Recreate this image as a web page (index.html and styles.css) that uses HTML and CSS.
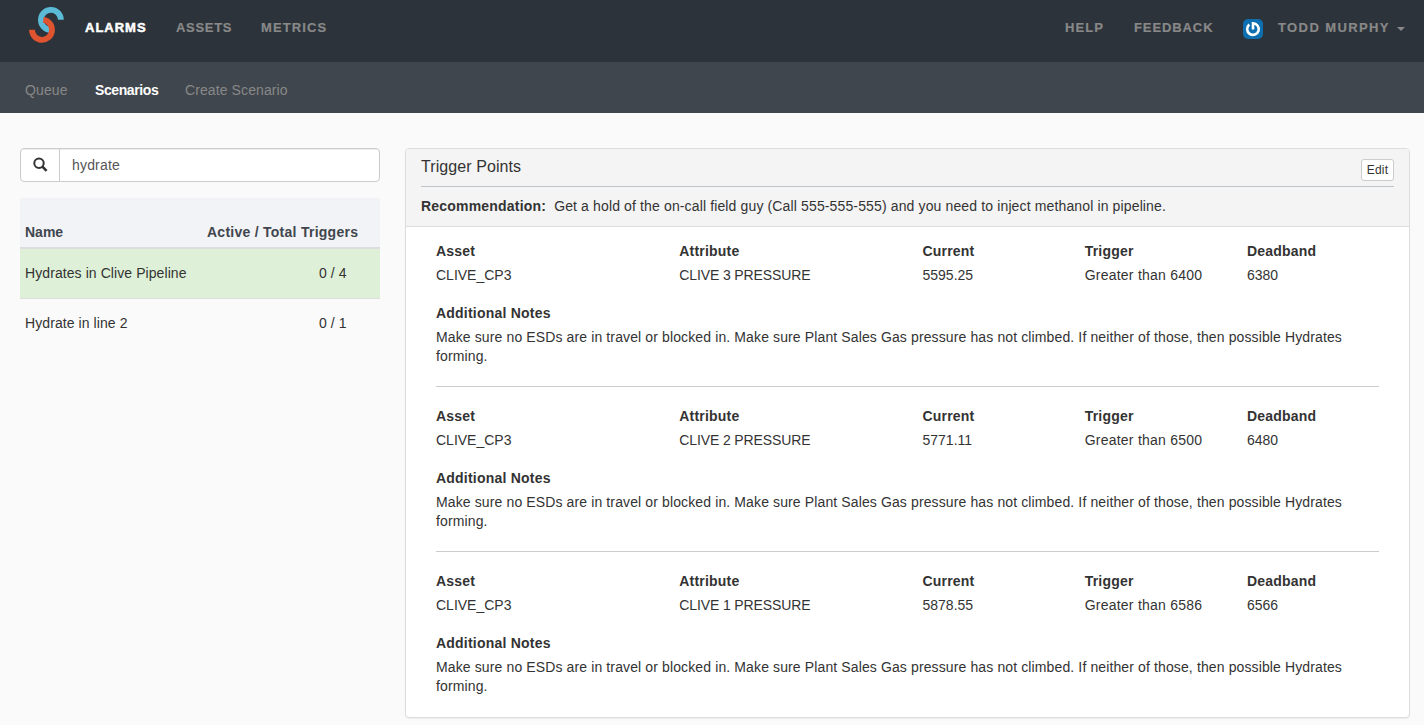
FILE: index.html
```html
<!DOCTYPE html>
<html lang="en">
<head>
<meta charset="utf-8">
<title>Scenarios</title>
<link rel="stylesheet" href="styles.css">
</head>
<body>
<header class="topbar">
  <svg class="logo" width="38" height="38" viewBox="0 0 38 38" fill="none" stroke-width="5.8">
    <path class="logo-blue" d="M33.9 13.7A10 10 0 1 0 22.5 23.8"/>
    <path class="logo-red" d="M5 23.8A10 10 0 1 0 16.4 13.9"/>
  </svg>
  <nav class="main-nav">
    <a class="nav-item active w-alarms">ALARMS</a>
    <a class="nav-item w-assets">ASSETS</a>
    <a class="nav-item w-metrics">METRICS</a>
  </nav>
  <nav class="user-nav">
    <a class="nav-item w-help">HELP</a>
    <a class="nav-item w-feedback">FEEDBACK</a>
    <svg class="avatar" width="20" height="20" viewBox="0 0 20 20">
      <rect width="20" height="20" rx="5" fill="#0d6fb0"/>
      <path d="M6.3 5.6A5.8 5.8 0 1 0 10 4.3V10.6" fill="none" stroke="#fff" stroke-width="2.6"/>
    </svg>
    <a class="nav-item w-user">TODD MURPHY</a>
    <span class="caret"></span>
  </nav>
</header>
<nav class="subnav">
  <a class="sub-item w-queue">Queue</a>
  <a class="sub-item active w-scenarios">Scenarios</a>
  <a class="sub-item w-create">Create Scenario</a>
</nav>
<main class="content">
  <aside class="sidebar">
    <div class="search">
      <span class="search-icon">
        <svg width="16" height="16" viewBox="0 0 16 16" fill="none" stroke="#333">
          <circle cx="6" cy="6.2" r="4.7" stroke-width="2"/>
          <path d="M9.4 9.6L13.6 13.8" stroke-width="2.6"/>
        </svg>
      </span>
      <span class="search-text">hydrate</span>
    </div>
    <div class="list-head"><span class="cell-name">Name</span><span class="cell-head-count">Active / Total Triggers</span></div>
    <div class="list-row selected"><span class="cell-name">Hydrates in Clive Pipeline</span><span class="cell-count">0 / 4</span></div>
    <div class="list-row"><span class="cell-name">Hydrate in line 2</span><span class="cell-count">0 / 1</span></div>
  </aside>
  <section class="panel">
    <div class="panel-head">
      <div class="title-row"><span class="title">Trigger Points</span><button class="edit">Edit</button></div>
      <div class="recommendation"><b class="rec-label">Recommendation:</b><span class="rec-text">Get a hold of the on-call field guy (Call 555-555-555) and you need to inject methanol in pipeline.</span></div>
    </div>
    <div class="panel-body">
      <article class="trigger">
        <div class="fields">
          <div><b>Asset</b><span>CLIVE_CP3</span></div>
          <div><b>Attribute</b><span class="attribute">CLIVE 3 PRESSURE</span></div>
          <div><b>Current</b><span>5595.25</span></div>
          <div><b>Trigger</b><span class="condition">Greater than 6400</span></div>
          <div><b>Deadband</b><span>6380</span></div>
        </div>
        <b class="notes-label">Additional Notes</b>
        <p class="notes">Make sure no ESDs are in travel or blocked in. Make sure Plant Sales Gas pressure has not climbed. If neither of those, then possible Hydrates<br>forming.</p>
      </article>
      <article class="trigger">
        <div class="fields">
          <div><b>Asset</b><span>CLIVE_CP3</span></div>
          <div><b>Attribute</b><span class="attribute">CLIVE 2 PRESSURE</span></div>
          <div><b>Current</b><span>5771.11</span></div>
          <div><b>Trigger</b><span class="condition">Greater than 6500</span></div>
          <div><b>Deadband</b><span>6480</span></div>
        </div>
        <b class="notes-label">Additional Notes</b>
        <p class="notes">Make sure no ESDs are in travel or blocked in. Make sure Plant Sales Gas pressure has not climbed. If neither of those, then possible Hydrates<br>forming.</p>
      </article>
      <article class="trigger">
        <div class="fields">
          <div><b>Asset</b><span>CLIVE_CP3</span></div>
          <div><b>Attribute</b><span class="attribute">CLIVE 1 PRESSURE</span></div>
          <div><b>Current</b><span>5878.55</span></div>
          <div><b>Trigger</b><span class="condition">Greater than 6586</span></div>
          <div><b>Deadband</b><span>6566</span></div>
        </div>
        <b class="notes-label">Additional Notes</b>
        <p class="notes">Make sure no ESDs are in travel or blocked in. Make sure Plant Sales Gas pressure has not climbed. If neither of those, then possible Hydrates<br>forming.</p>
      </article>
    </div>
  </section>
</main>
</body>
</html>
```
FILE: styles.css
```css
* { box-sizing: border-box; }
body {
  margin: 0;
  height: 725px;
  overflow: hidden;
  background: #fafafa;
  color: #333;
  font: 14px/20px "Liberation Sans", Arial, sans-serif;
  white-space: nowrap;
}
.topbar { display: flex; height: 62px; background: #2c333a; padding: 6px 19px 0 27px; }
.logo { flex: none; }
.logo-blue { stroke: #5bbad5; }
.logo-red { stroke: #e0532f; }
.main-nav, .user-nav { display: flex; padding-top: 12px; }
.main-nav { padding-left: 20px; }
.user-nav { margin-left: auto; }
.nav-item { flex: none; color: #888; font-size: 13px; font-weight: bold; letter-spacing: 1.1px; -webkit-text-stroke: .2px; }
.nav-item.active { color: #fff; -webkit-text-stroke: .5px; }
.w-alarms { width: 91px; letter-spacing: 1px; }
.w-assets { width: 85px; letter-spacing: .7px; }
.w-help { width: 69px; }
.w-feedback { width: 109px; letter-spacing: .9px; }
.w-user { width: 119px; letter-spacing: 1.4px; }
.avatar { flex: none; margin: 1px 15px 0 0; }
.caret { width: 8px; height: 4px; margin-top: 9px; border: 4px solid transparent; border-top-color: #888; border-bottom: 0; }
.subnav { display: flex; height: 51px; background: #40464d; padding: 18px 25px 0; }
.sub-item { color: #888; letter-spacing: .1px; }
.sub-item.active { color: #fff; font-weight: bold; letter-spacing: -.4px; }
.w-queue { width: 70px; }
.w-scenarios { width: 90px; }
.content { display: flex; align-items: flex-start; gap: 25px; padding: 35px 14px 0 20px; }
.sidebar { width: 360px; flex: none; letter-spacing: .08px; }
.search { display: flex; height: 34px; border: 1px solid #ccc; border-radius: 4px; background: #fff; box-shadow: inset 0 1px 1px rgba(0,0,0,.075); }
.search-icon { width: 39px; border-right: 1px solid #ccc; padding: 8px 0 0 12px; }
.search-icon svg { display: block; }
.search-text { padding: 6px 12px; color: #555; letter-spacing: .18px; }
.list-head { display: flex; height: 51px; margin-top: 16px; padding: 24px 5px 0; background: #f2f3f6; border-bottom: 2px solid #ddd; color: #40464d; font-weight: bold; letter-spacing: .26px; }
.list-row { display: flex; height: 50px; padding: 14px 5px 0; }
.list-row.selected { background: #dff0d8; border-bottom: 1px solid #ddd; }
.list-head .cell-name { width: 182px; letter-spacing: 0; }
.list-row .cell-name { width: 294px; }
.panel { flex: 1; height: 570px; background: #fff; border: 1px solid #ddd; border-radius: 4px; box-shadow: 0 1px 1px rgba(0,0,0,.05); overflow: hidden; }
.panel-head { height: 78px; background: #f4f4f4; border-bottom: 1px solid #ddd; padding: 0 15px; }
.title-row { display: flex; justify-content: space-between; height: 38px; border-bottom: 1px solid #bfc4c9; }
.title { font-size: 16px; padding-top: 8px; letter-spacing: .08px; }
.edit { width: 33px; height: 22px; margin-top: 10px; padding: 0; border: 1px solid #ccc; border-radius: 3px; background: #fff; color: #333; font: 12px/18px "Liberation Sans", Arial, sans-serif; letter-spacing: .15px; }
.recommendation { display: flex; gap: 8px; padding-top: 9px; }
.rec-label { letter-spacing: .2px; }
.rec-text { letter-spacing: .135px; }
.panel-body { padding: 0 30px; }
.trigger { height: 165px; padding-top: 19px; }
.trigger:first-child { height: 159px; padding-top: 14px; }
.trigger + .trigger { border-top: 1px solid #ccc; }
.fields { display: grid; grid-template-columns: 243.25px 243.25px 162.2px 162.2px auto; }
.fields div, .fields span, .fields b { display: block; }
.fields b { letter-spacing: .2px; }
.fields span { margin-top: 4px; }
.fields .attribute { letter-spacing: -.12px; }
.fields .condition { letter-spacing: .23px; }
.notes-label { display: block; margin-top: 18px; letter-spacing: .22px; }
.notes { margin: 5px 0 0; line-height: 19px; letter-spacing: .122px; }
```
